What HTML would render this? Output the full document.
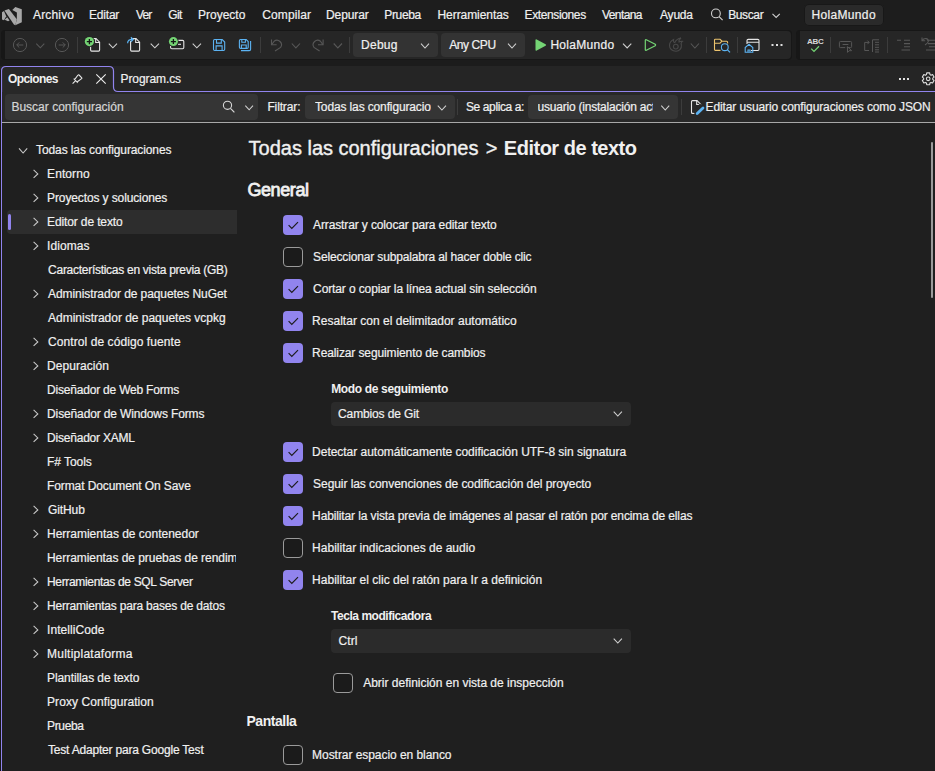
<!DOCTYPE html>
<html><head><meta charset="utf-8"><style>
html,body{margin:0;padding:0;width:935px;height:771px;overflow:hidden;background:#1f1f1f}
.r,.i,.t,.cb{position:absolute}
.t{font-family:"Liberation Sans",sans-serif;white-space:nowrap;line-height:40px;height:40px}
.cb{width:18px;height:18px;border:1px solid #9a9a9a;border-radius:4px;background:#1b1b1b}
.cb.on{width:20px;height:20px;border:none;background:#9184ee}
</style></head><body>
<div class="r" style="left:0px;top:0px;width:935px;height:30px;background:#1d1d1d;"></div>
<svg class="i" style="left:0;top:4px" width="26" height="24" viewBox="0 0 26 24"><g fill="#a8a8a8">
<path d="M2 8.2 L4 7 L6.2 12.2 L4 16.2 L2 15.6 Z"/>
<path d="M4.5 6.6 L8.9 5.1 L16.8 15.2 L15.3 21.2 L13.9 20.4 Z"/>
<path d="M4.7 15.8 L7.2 13.2 L9.6 16.4 L8 17.2 Z"/>
<path d="M12.3 5.9 L15.3 3.1 L21.8 5.3 V18.3 L15.3 21.2 L16.8 15.4 L16.9 8.5 Z"/>
</g></svg>
<div class="r" style="left:804px;top:4px;width:80px;height:22px;background:#2a2a2a;border-radius:5px;box-shadow:inset 0 0 0 1px #181818"></div>
<div class="r" style="left:0px;top:30px;width:935px;height:30px;background:#1d1d1d;"></div>
<div class="r" style="left:1px;top:30px;width:791px;height:30px;background:#171717;border-radius:4px"></div>
<div class="r" style="left:5px;top:31px;width:786px;height:28px;background:#262626;border-radius:0 4px 4px 0"></div>
<div class="r" style="left:796px;top:30px;width:145px;height:30px;background:#171717;border-radius:4px"></div>
<div class="r" style="left:800px;top:31px;width:140px;height:28px;background:#262626;"></div>
<div class="r" style="left:77px;top:37px;width:1px;height:16px;background:#3c3c3c;"></div>
<div class="r" style="left:260px;top:37px;width:1px;height:16px;background:#3c3c3c;"></div>
<div class="r" style="left:349px;top:37px;width:1px;height:16px;background:#3c3c3c;"></div>
<div class="r" style="left:353px;top:33px;width:85px;height:24px;background:#333333;border-radius:4px"></div>
<div class="r" style="left:441px;top:33px;width:84px;height:24px;background:#333333;border-radius:4px"></div>
<div class="r" style="left:706px;top:37px;width:1px;height:16px;background:#3c3c3c;"></div>
<div class="r" style="left:737px;top:37px;width:1px;height:16px;background:#3c3c3c;"></div>
<div class="t" style="left:807px;top:32px;font-size:8px;font-weight:700;color:#d8d8d8;line-height:20px;height:20px;letter-spacing:-0.3px">ABC</div>
<div class="r" style="left:830px;top:37px;width:1px;height:16px;background:#3c3c3c;"></div>
<div class="r" style="left:887px;top:37px;width:1px;height:16px;background:#3c3c3c;"></div>
<div class="r" style="left:0px;top:60px;width:935px;height:6px;background:#1c1c1c;"></div>
<div class="r" style="left:0px;top:66px;width:935px;height:26px;background:#252525;"></div>
<svg class="i" style="left:0;top:60px" width="935" height="711"><path d="M1.5 711 V11 Q1.5 6.5 6 6.5 H109 Q113.5 6.5 113.5 11 V27 Q113.5 31.5 118 31.5 H935" fill="#282828" stroke="#9184ee" stroke-width="1.2"/></svg>
<div class="r" style="left:2px;top:92px;width:933px;height:30px;background:#282828;"></div>
<div class="r" style="left:5px;top:94px;width:253px;height:26px;background:#353535;border-radius:4px"></div>
<div class="r" style="left:305px;top:95px;width:150px;height:24px;background:#353535;border-radius:4px"></div>
<div class="r" style="left:457px;top:99px;width:1px;height:16px;background:#3c3c3c;"></div>
<div class="r" style="left:528px;top:95px;width:150px;height:24px;background:#353535;border-radius:4px"></div>
<div class="r" style="left:681px;top:99px;width:1px;height:16px;background:#3c3c3c;"></div>
<div class="r" style="left:2px;top:122px;width:933px;height:1px;background:#a8a8a8;"></div>
<div class="r" style="left:2px;top:123px;width:933px;height:648px;background:#1f1f1f;"></div>
<div class="r" style="left:7px;top:210px;width:230px;height:24px;background:#2d2d2d;border-radius:4px 0 0 4px"></div>
<div class="r" style="left:8px;top:214px;width:3px;height:16px;background:#9184ee;border-radius:2px"></div>
<div class="cb on" style="left:283px;top:215px"></div>
<div class="cb" style="left:283px;top:247px"></div>
<div class="cb on" style="left:283px;top:279px"></div>
<div class="cb on" style="left:283px;top:311px"></div>
<div class="cb on" style="left:283px;top:343px"></div>
<div class="cb on" style="left:283px;top:442px"></div>
<div class="cb on" style="left:283px;top:474px"></div>
<div class="cb on" style="left:283px;top:506px"></div>
<div class="cb" style="left:283px;top:538px"></div>
<div class="cb on" style="left:283px;top:570px"></div>
<div class="cb" style="left:283px;top:745px"></div>
<div class="cb" style="left:333px;top:673px"></div>
<div class="r" style="left:331px;top:402px;width:300px;height:24px;background:#2b2b2b;border-radius:4px"></div>
<div class="r" style="left:331px;top:629px;width:300px;height:24px;background:#2b2b2b;border-radius:4px"></div>
<div class="r" style="left:931px;top:142px;width:2px;height:156px;background:#9a9a9a;border-radius:1px"></div>
<div class="r" style="left:0px;top:70px;width:1px;height:701px;background:#161616;"></div>
<svg class="i" style="left:0;top:0" width="935" height="771">
<circle cx="715.9" cy="13.4" r="4.4" fill="none" stroke="#d0d0d0" stroke-width="1.1"/><path d="M719.1 16.7 L722.6 20.2" stroke="#d0d0d0" stroke-width="1.2"/>
<path d="M772.5 13.8 L776.15 17.4 L779.8 13.8" fill="none" stroke="#d0d0d0" stroke-width="1.1"/>
<circle cx="20" cy="45" r="6.6" fill="none" stroke="#575757" stroke-width="1"/><path d="M23.3 45 H16.8 M19.3 42.4 L16.7 45 L19.3 47.6" fill="none" stroke="#575757" stroke-width="1"/>
<path d="M36.3 43.6 L40.3 47.8 L44.3 43.6" fill="none" stroke="#575757" stroke-width="1.1"/>
<circle cx="62" cy="45" r="6.6" fill="none" stroke="#575757" stroke-width="1"/><path d="M58.7 45 H65.2 M62.7 42.4 L65.3 45 L62.7 47.6" fill="none" stroke="#575757" stroke-width="1"/>
<path d="M90.6 39.6 Q90.6 38.6 91.6 38.6 H96.0 L99.6 42.2 V50.1 Q99.6 51.1 98.6 51.1 H91.6 Q90.6 51.1 90.6 50.1 Z" fill="none" stroke="#e6e6e6" stroke-width="1.1"/><path d="M95.7 38.6 V42.5 H99.6" fill="none" stroke="#e6e6e6" stroke-width="1.1"/>
<circle cx="89.4" cy="41.6" r="5.4" fill="#262626"/><circle cx="89.4" cy="41.6" r="4.6" fill="#74d474"/><path d="M89.4 39 V44.2 M86.8 41.6 H92" stroke="#151515" stroke-width="1.3"/>
<path d="M108.8 43.6 L112.9 47.8 L117 43.6" fill="none" stroke="#d0d0d0" stroke-width="1.1"/>
<path d="M130.6 39.6 Q130.6 38.6 131.6 38.6 H136.0 L139.6 42.2 V50.1 Q139.6 51.1 138.6 51.1 H131.6 Q130.6 51.1 130.6 50.1 Z" fill="none" stroke="#e6e6e6" stroke-width="1.1"/><path d="M135.7 38.6 V42.5 H139.6" fill="none" stroke="#e6e6e6" stroke-width="1.1"/>
<rect x="126" y="36" width="5" height="5" fill="#262626"/><path d="M127.6 43.2 Q127.6 39.4 132.8 39.4" fill="none" stroke="#5cb3f2" stroke-width="1.2"/><path d="M130.9 37.3 L133.2 39.5 L130.9 41.7" fill="none" stroke="#5cb3f2" stroke-width="1.2"/>
<path d="M150.7 43.6 L154.85 47.8 L159 43.6" fill="none" stroke="#d0d0d0" stroke-width="1.1"/>
<rect x="170.6" y="40.4" width="13.2" height="8.4" rx="1.2" fill="none" stroke="#e6e6e6" stroke-width="1.1"/><path d="M178 44.3 H181" stroke="#e6e6e6" stroke-width="1.1"/>
<circle cx="173.4" cy="41.6" r="5.3" fill="#262626"/><circle cx="173.4" cy="41.6" r="4.5" fill="#74d474"/><path d="M173.4 39.1 V44.1 M170.9 41.6 H175.9" stroke="#151515" stroke-width="1.3"/>
<path d="M192.7 43.6 L196.85 47.8 L201 43.6" fill="none" stroke="#d0d0d0" stroke-width="1.1"/>
<path d="M213.5 40.7 Q213.5 39.5 214.7 39.5 H222.2 L224.7 42.0 V49.3 Q224.7 50.5 223.5 50.5 H214.7 Q213.5 50.5 213.5 49.3 Z" fill="none" stroke="#5cb3f2" stroke-width="1.1"/><path d="M216.5 39.5 V43.1 H221.29999999999998 V39.5 M216.1 50.5 V45.9 H222.1 V50.5" fill="none" stroke="#5cb3f2" stroke-width="1.1"/>
<path d="M239.4 40.7 Q239.4 39.5 240.6 39.5 H246.2 L248.2 41.5 V47.199999999999996 Q248.2 48.4 247.0 48.4 H240.6 Q239.4 48.4 239.4 47.199999999999996 Z" fill="none" stroke="#5cb3f2" stroke-width="1.1"/><path d="M241.8 39.5 V42.3 H245.39999999999998 V39.5 M241.4 48.4 V45.0 H246.2 V48.4" fill="none" stroke="#5cb3f2" stroke-width="1.1"/>
<path d="M241 50.6 H249.2 Q250.6 50.6 250.6 49.2 V41" fill="none" stroke="#5cb3f2" stroke-width="1.1"/>
<path d="M271.5 39.4 V44.8 H276.6" fill="none" stroke="#575757" stroke-width="1.1"/><path d="M271.9 44.4 L274.1 41.3 A4.5 4.5 0 0 1 280.6 47.4 L275 51" fill="none" stroke="#575757" stroke-width="1.1"/>
<g transform="translate(594.6 0) scale(-1 1)"><path d="M271.5 39.4 V44.8 H276.6" fill="none" stroke="#575757" stroke-width="1.1"/><path d="M271.9 44.4 L274.1 41.3 A4.5 4.5 0 0 1 280.6 47.4 L275 51" fill="none" stroke="#575757" stroke-width="1.1"/></g>
<path d="M291.8 43.5 L295.9 47.9 L300 43.5" fill="none" stroke="#575757" stroke-width="1.1"/>
<path d="M333.7 43.5 L337.85 47.9 L342 43.5" fill="none" stroke="#575757" stroke-width="1.1"/>
<path d="M421 43.6 L425.0 48 L429 43.6" fill="none" stroke="#d0d0d0" stroke-width="1.1"/>
<path d="M508 43.6 L512.0 48 L516 43.6" fill="none" stroke="#d0d0d0" stroke-width="1.1"/>
<path d="M535.5 40.2 Q535.5 38.9 536.7 39.5 L545.6 44.2 Q546.6 45 545.6 45.8 L536.7 50.5 Q535.5 51.1 535.5 49.8 Z" fill="#74d474"/>
<path d="M623 43.6 L627.15 48 L631.3 43.6" fill="none" stroke="#d0d0d0" stroke-width="1.1"/>
<path d="M645.3 40.3 Q645.3 39.3 646.3 39.8 L655.2 44.3 Q656 45 655.2 45.7 L646.3 50.2 Q645.3 50.7 645.3 49.7 Z" fill="none" stroke="#74d474" stroke-width="1.2"/>
<path d="M676 51.2 C672 51.2 669.5 48.6 669.5 45.6 C669.5 42.6 671.5 40.6 673.6 39.6 C673.2 41.4 673.8 42.4 674.8 42.6 C675.6 40.6 677.4 38.6 681 38 C679.2 39.4 678.6 40.8 679 42 C680 41.4 681.2 41.2 682.4 41.4 C681 42.4 680.8 43.6 681.4 45 C681.8 48.6 679.4 51.2 676 51.2 Z" fill="none" stroke="#484848" stroke-width="1.1"/><circle cx="675.8" cy="46.6" r="2.4" fill="none" stroke="#484848" stroke-width="1.1"/>
<path d="M690.8 43.5 L694.9 48 L699 43.5" fill="none" stroke="#575757" stroke-width="1.1"/>
<path d="M714.5 49.6 V40 Q714.5 39.3 715.3 39.3 H720 L722 41.2 H726.6 Q727.6 41.2 727.6 42.2 V43.5 M714.5 49.6 Q714.5 50.4 715.3 50.4 H720.5 M714.5 43.2 H720 L722 41.2" fill="none" stroke="#ecc46e" stroke-width="1.1"/>
<circle cx="724.8" cy="47.2" r="3.4" fill="#262626" stroke="#5cb3f2" stroke-width="1.1"/><path d="M727.3 49.7 L730 52.4" stroke="#5cb3f2" stroke-width="1.2"/>
<path d="M751 50.5 H757.8 Q759 50.5 759 49.3 V40.6 Q759 39.4 757.8 39.4 H748.2 Q747 39.4 747 40.6 V44 M747 42.2 H759" fill="none" stroke="#e6e6e6" stroke-width="1.1"/>
<path d="M745.2 52.2 V47.6 L749 44.3 L752.8 47.6 V52.2 Z M748 52.2 V50 H750 V52.2" fill="none" stroke="#5cb3f2" stroke-width="1.1"/>
<rect x="771.5" y="44" width="2" height="2" fill="#e0e0e0"/><rect x="776" y="44" width="2" height="2" fill="#e0e0e0"/><rect x="780.5" y="44" width="2" height="2" fill="#e0e0e0"/>
<path d="M811.2 48.6 L814 51.4 L819 46.2" fill="none" stroke="#74d474" stroke-width="1.3"/>
<path d="M846.8 47.6 H850.6 Q851.6 47.6 851.6 46.6 V42.5 Q851.6 41.5 850.6 41.5 H840.4 Q839.4 41.5 839.4 42.5 V46.6 Q839.4 47.6 840.4 47.6 H845.2 M842.6 44.5 H848.4 M847.5 46.6 V52.4 L849.1 50.7 H851.6 Z" fill="none" stroke="#575757" stroke-width="1"/>
<path d="M869 42.4 H864.7 V50.5 H869 M867.4 40.6 L869.2 42.4 L867.4 44.2" fill="none" stroke="#575757" stroke-width="1"/><path d="M872.5 52 V39.8 H879 M875 42.3 H879 M875 44.8 H879 M875 47.3 H879 M875 49.8 H879 M875 52 H879" fill="none" stroke="#575757" stroke-width="1"/>
<path d="M897 40.2 H901 M904 40.2 H910 M904 43.6 H910 M904 46.8 H910 M901.5 50 H910" fill="none" stroke="#575757" stroke-width="1.1"/>
<path d="M922 37.6 V40.8 H925.2 M922.4 40.4 C924 37.6 928.4 38.2 928.4 41 C928.4 42.8 926.6 44 925 45 M927 40.2 H935 M928 43.6 H935 M929 46.8 H935 M926 50 H935" fill="none" stroke="#575757" stroke-width="1.1"/>
<path d="M72.6 83.6 L75.4 80.8 M73.7 78.7 L77.9 82.9 M74.6 79.6 L78 75 Q78.4 74.4 79 75 L81.6 77.6 Q82.2 78.2 81.6 78.6 L77 82" fill="none" stroke="#e6e6e6" stroke-width="1.1"/>
<path d="M96.3 74.3 L105.7 83.7 M105.7 74.3 L96.3 83.7" stroke="#eeeeee" stroke-width="1.1"/>
<rect x="899" y="78" width="2" height="2" fill="#e0e0e0"/><rect x="903" y="78" width="2" height="2" fill="#e0e0e0"/><rect x="907" y="78" width="2" height="2" fill="#e0e0e0"/>
<path d="M926.72 72.88 L929.68 72.88 L929.92 74.53 L931.03 75.18 L932.59 74.56 L934.06 77.12 L932.76 78.16 L932.76 79.44 L934.06 80.48 L932.59 83.04 L931.03 82.42 L929.92 83.07 L929.68 84.72 L926.72 84.72 L926.48 83.07 L925.37 82.42 L923.81 83.04 L922.34 80.48 L923.64 79.44 L923.64 78.16 L922.34 77.12 L923.81 74.56 L925.37 75.18 L926.48 74.53 Z" fill="none" stroke="#dedede" stroke-width="1.1" stroke-linejoin="round"/><circle cx="928.2" cy="78.8" r="1.8" fill="none" stroke="#dedede" stroke-width="1.1"/>
<circle cx="227.5" cy="105.3" r="4.1" fill="none" stroke="#d8d8d8" stroke-width="1.1"/><path d="M230.5 108.4 L234.4 112.4" stroke="#d8d8d8" stroke-width="1.2"/>
<path d="M245.3 105.6 L249.15 109.8 L253 105.6" fill="none" stroke="#d0d0d0" stroke-width="1.1"/>
<path d="M437.8 105.6 L441.9 110 L446 105.6" fill="none" stroke="#d0d0d0" stroke-width="1.1"/>
<path d="M661.3 105.6 L665.25 110 L669.2 105.6" fill="none" stroke="#d0d0d0" stroke-width="1.1"/>
<path d="M691.5 101.6 Q691.5 100.6 692.5 100.6 H697.0 L700.6 104.19999999999999 V112.4 Q700.6 113.4 699.6 113.4 H692.5 Q691.5 113.4 691.5 112.4 Z" fill="none" stroke="#e6e6e6" stroke-width="1.1"/><path d="M696.7 100.6 V104.49999999999999 H700.6" fill="none" stroke="#e6e6e6" stroke-width="1.1"/>
<rect x="694" y="106" width="11" height="10" fill="#282828" transform="rotate(-43 699.5 111)"/><path d="M697.2 113.5 L703 108" stroke="#5cb3f2" stroke-width="2.8" stroke-linecap="round"/>
<path d="M19 148.3 L23.1 153 L27.2 148.3" fill="none" stroke="#c8c8c8" stroke-width="1.1"/>
<path d="M33.6 169.9 L37.8 173.9 L33.6 177.9" fill="none" stroke="#c8c8c8" stroke-width="1.1"/>
<path d="M33.6 193.9 L37.8 197.9 L33.6 201.9" fill="none" stroke="#c8c8c8" stroke-width="1.1"/>
<path d="M33.6 217.9 L37.8 221.9 L33.6 225.9" fill="none" stroke="#c8c8c8" stroke-width="1.1"/>
<path d="M33.6 241.9 L37.8 245.9 L33.6 249.9" fill="none" stroke="#c8c8c8" stroke-width="1.1"/>
<path d="M33.6 289.9 L37.8 293.9 L33.6 297.9" fill="none" stroke="#c8c8c8" stroke-width="1.1"/>
<path d="M33.6 337.9 L37.8 341.9 L33.6 345.9" fill="none" stroke="#c8c8c8" stroke-width="1.1"/>
<path d="M33.6 361.9 L37.8 365.9 L33.6 369.9" fill="none" stroke="#c8c8c8" stroke-width="1.1"/>
<path d="M33.6 409.9 L37.8 413.9 L33.6 417.9" fill="none" stroke="#c8c8c8" stroke-width="1.1"/>
<path d="M33.6 433.9 L37.8 437.9 L33.6 441.9" fill="none" stroke="#c8c8c8" stroke-width="1.1"/>
<path d="M33.6 505.9 L37.8 509.9 L33.6 513.9" fill="none" stroke="#c8c8c8" stroke-width="1.1"/>
<path d="M33.6 529.9 L37.8 533.9 L33.6 537.9" fill="none" stroke="#c8c8c8" stroke-width="1.1"/>
<path d="M33.6 577.9 L37.8 581.9 L33.6 585.9" fill="none" stroke="#c8c8c8" stroke-width="1.1"/>
<path d="M33.6 601.9 L37.8 605.9 L33.6 609.9" fill="none" stroke="#c8c8c8" stroke-width="1.1"/>
<path d="M33.6 625.9 L37.8 629.9 L33.6 633.9" fill="none" stroke="#c8c8c8" stroke-width="1.1"/>
<path d="M33.6 649.9 L37.8 653.9 L33.6 657.9" fill="none" stroke="#c8c8c8" stroke-width="1.1"/>
<path d="M288.6 225.2 L291.8 228.4 L298 222.2" fill="none" stroke="#1c1c1c" stroke-width="1.2"/>
<path d="M288.6 289.2 L291.8 292.4 L298 286.2" fill="none" stroke="#1c1c1c" stroke-width="1.2"/>
<path d="M288.6 321.2 L291.8 324.4 L298 318.2" fill="none" stroke="#1c1c1c" stroke-width="1.2"/>
<path d="M288.6 353.2 L291.8 356.4 L298 350.2" fill="none" stroke="#1c1c1c" stroke-width="1.2"/>
<path d="M288.6 452.2 L291.8 455.4 L298 449.2" fill="none" stroke="#1c1c1c" stroke-width="1.2"/>
<path d="M288.6 484.2 L291.8 487.4 L298 481.2" fill="none" stroke="#1c1c1c" stroke-width="1.2"/>
<path d="M288.6 516.2 L291.8 519.4 L298 513.2" fill="none" stroke="#1c1c1c" stroke-width="1.2"/>
<path d="M288.6 580.2 L291.8 583.4 L298 577.2" fill="none" stroke="#1c1c1c" stroke-width="1.2"/>
<path d="M613.7 411.6 L617.8 416 L621.9 411.6" fill="none" stroke="#d0d0d0" stroke-width="1.1"/>
<path d="M613.7 638.6 L617.8 643 L621.9 638.6" fill="none" stroke="#d0d0d0" stroke-width="1.1"/>
</svg>
<div class="t" style="left:33.00px;top:-5px;font-size:12px;letter-spacing:0.167px;color:#f0f0f0;-webkit-text-stroke:0.2px #f0f0f0">Archivo</div>
<div class="t" style="left:89.00px;top:-5px;font-size:12px;letter-spacing:-0.200px;color:#f0f0f0;-webkit-text-stroke:0.2px #f0f0f0">Editar</div>
<div class="t" style="left:136.00px;top:-5px;font-size:12px;letter-spacing:-0.900px;color:#f0f0f0;-webkit-text-stroke:0.2px #f0f0f0">Ver</div>
<div class="t" style="left:168.30px;top:-5px;font-size:12px;letter-spacing:-0.650px;color:#f0f0f0;-webkit-text-stroke:0.2px #f0f0f0">Git</div>
<div class="t" style="left:198.00px;top:-5px;font-size:12px;letter-spacing:0.000px;color:#f0f0f0;-webkit-text-stroke:0.2px #f0f0f0">Proyecto</div>
<div class="t" style="left:262.30px;top:-5px;font-size:12px;letter-spacing:0.114px;color:#f0f0f0;-webkit-text-stroke:0.2px #f0f0f0">Compilar</div>
<div class="t" style="left:326.00px;top:-5px;font-size:12px;letter-spacing:-0.100px;color:#f0f0f0;-webkit-text-stroke:0.2px #f0f0f0">Depurar</div>
<div class="t" style="left:384.30px;top:-5px;font-size:12px;letter-spacing:-0.360px;color:#f0f0f0;-webkit-text-stroke:0.2px #f0f0f0">Prueba</div>
<div class="t" style="left:437.50px;top:-5px;font-size:12px;letter-spacing:-0.064px;color:#f0f0f0;-webkit-text-stroke:0.2px #f0f0f0">Herramientas</div>
<div class="t" style="left:524.50px;top:-5px;font-size:12px;letter-spacing:-0.370px;color:#f0f0f0;-webkit-text-stroke:0.2px #f0f0f0">Extensiones</div>
<div class="t" style="left:602.00px;top:-5px;font-size:12px;letter-spacing:-0.583px;color:#f0f0f0;-webkit-text-stroke:0.2px #f0f0f0">Ventana</div>
<div class="t" style="left:660.00px;top:-5px;font-size:12px;letter-spacing:-0.200px;color:#f0f0f0;-webkit-text-stroke:0.2px #f0f0f0">Ayuda</div>
<div class="t" style="left:728.20px;top:-5px;font-size:12px;letter-spacing:-0.380px;color:#f0f0f0;-webkit-text-stroke:0.2px #f0f0f0">Buscar</div>
<div class="t" style="left:811.40px;top:-5px;font-size:12px;letter-spacing:0.350px;color:#f0f0f0;-webkit-text-stroke:0.2px #f0f0f0">HolaMundo</div>
<div class="t" style="left:361.10px;top:25px;font-size:12px;letter-spacing:0.225px;color:#f0f0f0;-webkit-text-stroke:0.2px #f0f0f0">Debug</div>
<div class="t" style="left:449.20px;top:25px;font-size:12px;letter-spacing:-0.400px;color:#f0f0f0;-webkit-text-stroke:0.2px #f0f0f0">Any CPU</div>
<div class="t" style="left:550.40px;top:25px;font-size:12px;letter-spacing:0.300px;color:#f0f0f0;-webkit-text-stroke:0.2px #f0f0f0">HolaMundo</div>
<div class="t" style="left:8.10px;top:59px;font-size:12px;letter-spacing:-0.614px;color:#f0f0f0;font-weight:700">Opciones</div>
<div class="t" style="left:120.50px;top:59px;font-size:12px;letter-spacing:-0.089px;color:#f0f0f0;-webkit-text-stroke:0.2px #f0f0f0">Program.cs</div>
<div class="t" style="left:11.40px;top:87px;font-size:12px;letter-spacing:0.011px;color:#d6d6d6;-webkit-text-stroke:0.2px #d6d6d6">Buscar configuración</div>
<div class="t" style="left:267.40px;top:87px;font-size:12px;letter-spacing:-0.129px;color:#f0f0f0;-webkit-text-stroke:0.2px #f0f0f0">Filtrar:</div>
<div class="t" style="left:315.00px;top:87px;font-size:12px;letter-spacing:-0.133px;color:#f0f0f0;-webkit-text-stroke:0.2px #f0f0f0;width:115.80000000000001px;overflow:hidden">Todas las configuraciones</div>
<div class="t" style="left:466.00px;top:87px;font-size:12px;letter-spacing:-0.391px;color:#f0f0f0;-webkit-text-stroke:0.2px #f0f0f0">Se aplica a:</div>
<div class="t" style="left:537.50px;top:87px;font-size:12px;letter-spacing:-0.214px;color:#f0f0f0;-webkit-text-stroke:0.2px #f0f0f0;width:115.89999999999998px;overflow:hidden">usuario (instalación actual)</div>
<div class="t" style="left:705.50px;top:87px;font-size:12px;letter-spacing:-0.108px;color:#f0f0f0;-webkit-text-stroke:0.2px #f0f0f0">Editar usuario configuraciones como JSON</div>
<div class="t" style="left:36.10px;top:130px;font-size:12px;letter-spacing:-0.112px;color:#f0f0f0;-webkit-text-stroke:0.2px #f0f0f0">Todas las configuraciones</div>
<div class="t" style="left:47.10px;top:154px;font-size:12px;letter-spacing:0.083px;color:#f0f0f0;-webkit-text-stroke:0.2px #f0f0f0">Entorno</div>
<div class="t" style="left:47.10px;top:178px;font-size:12px;letter-spacing:-0.119px;color:#f0f0f0;-webkit-text-stroke:0.2px #f0f0f0">Proyectos y soluciones</div>
<div class="t" style="left:47.10px;top:202px;font-size:12px;letter-spacing:-0.129px;color:#f0f0f0;-webkit-text-stroke:0.2px #f0f0f0">Editor de texto</div>
<div class="t" style="left:47.10px;top:226px;font-size:12px;letter-spacing:0.083px;color:#f0f0f0;-webkit-text-stroke:0.2px #f0f0f0">Idiomas</div>
<div class="t" style="left:48.10px;top:250px;font-size:12px;letter-spacing:-0.277px;color:#f0f0f0;-webkit-text-stroke:0.2px #f0f0f0">Características en vista previa (GB)</div>
<div class="t" style="left:48.10px;top:274px;font-size:12px;letter-spacing:-0.090px;color:#f0f0f0;-webkit-text-stroke:0.2px #f0f0f0">Administrador de paquetes NuGet</div>
<div class="t" style="left:48.10px;top:298px;font-size:12px;letter-spacing:-0.020px;color:#f0f0f0;-webkit-text-stroke:0.2px #f0f0f0">Administrador de paquetes vcpkg</div>
<div class="t" style="left:48.10px;top:322px;font-size:12px;letter-spacing:0.074px;color:#f0f0f0;-webkit-text-stroke:0.2px #f0f0f0">Control de código fuente</div>
<div class="t" style="left:47.10px;top:346px;font-size:12px;letter-spacing:0.044px;color:#f0f0f0;-webkit-text-stroke:0.2px #f0f0f0">Depuración</div>
<div class="t" style="left:47.10px;top:370px;font-size:12px;letter-spacing:-0.205px;color:#f0f0f0;-webkit-text-stroke:0.2px #f0f0f0">Diseñador de Web Forms</div>
<div class="t" style="left:47.10px;top:394px;font-size:12px;letter-spacing:-0.136px;color:#f0f0f0;-webkit-text-stroke:0.2px #f0f0f0">Diseñador de Windows Forms</div>
<div class="t" style="left:47.10px;top:418px;font-size:12px;letter-spacing:-0.215px;color:#f0f0f0;-webkit-text-stroke:0.2px #f0f0f0">Diseñador XAML</div>
<div class="t" style="left:47.10px;top:442px;font-size:12px;letter-spacing:-0.057px;color:#f0f0f0;-webkit-text-stroke:0.2px #f0f0f0">F# Tools</div>
<div class="t" style="left:47.00px;top:466px;font-size:12px;letter-spacing:-0.100px;color:#f0f0f0;-webkit-text-stroke:0.2px #f0f0f0">Format Document On Save</div>
<div class="t" style="left:48.00px;top:490px;font-size:12px;letter-spacing:-0.100px;color:#f0f0f0;-webkit-text-stroke:0.2px #f0f0f0">GitHub</div>
<div class="t" style="left:47.00px;top:514px;font-size:12px;letter-spacing:-0.012px;color:#f0f0f0;-webkit-text-stroke:0.2px #f0f0f0">Herramientas de contenedor</div>
<div class="t" style="left:47.00px;top:538px;font-size:12px;letter-spacing:-0.050px;color:#f0f0f0;-webkit-text-stroke:0.2px #f0f0f0;width:189.0px;overflow:hidden">Herramientas de pruebas de rendimiento</div>
<div class="t" style="left:47.00px;top:562px;font-size:12px;letter-spacing:-0.336px;color:#f0f0f0;-webkit-text-stroke:0.2px #f0f0f0">Herramientas de SQL Server</div>
<div class="t" style="left:47.00px;top:586px;font-size:12px;letter-spacing:-0.200px;color:#f0f0f0;-webkit-text-stroke:0.2px #f0f0f0">Herramientas para bases de datos</div>
<div class="t" style="left:47.00px;top:610px;font-size:12px;letter-spacing:0.060px;color:#f0f0f0;-webkit-text-stroke:0.2px #f0f0f0">IntelliCode</div>
<div class="t" style="left:47.00px;top:634px;font-size:12px;letter-spacing:0.250px;color:#f0f0f0;-webkit-text-stroke:0.2px #f0f0f0">Multiplataforma</div>
<div class="t" style="left:47.00px;top:658px;font-size:12px;letter-spacing:-0.094px;color:#f0f0f0;-webkit-text-stroke:0.2px #f0f0f0">Plantillas de texto</div>
<div class="t" style="left:47.00px;top:682px;font-size:12px;letter-spacing:0.078px;color:#f0f0f0;-webkit-text-stroke:0.2px #f0f0f0">Proxy Configuration</div>
<div class="t" style="left:47.00px;top:706px;font-size:12px;letter-spacing:-0.340px;color:#f0f0f0;-webkit-text-stroke:0.2px #f0f0f0">Prueba</div>
<div class="t" style="left:48.00px;top:730px;font-size:12px;letter-spacing:-0.196px;color:#f0f0f0;-webkit-text-stroke:0.2px #f0f0f0">Test Adapter para Google Test</div>
<div class="t" style="left:248.60px;top:128px;font-size:20px;letter-spacing:-0.012px;color:#f0f0f0;-webkit-text-stroke:0.4px #f0f0f0">Todas las configuraciones</div>
<div class="t" style="left:485.80px;top:128px;font-size:20px;letter-spacing:-0.600px;color:#f0f0f0;-webkit-text-stroke:0.3px #f0f0f0">&gt;</div>
<div class="t" style="left:503.80px;top:128px;font-size:20px;letter-spacing:-0.486px;color:#f0f0f0;font-weight:700">Editor de texto</div>
<div class="t" style="left:247.40px;top:170px;font-size:18px;letter-spacing:-0.400px;color:#f0f0f0;-webkit-text-stroke:0.8px #f0f0f0">General</div>
<div class="t" style="left:313.10px;top:205px;font-size:12px;letter-spacing:-0.128px;color:#f0f0f0;-webkit-text-stroke:0.2px #f0f0f0">Arrastrar y colocar para editar texto</div>
<div class="t" style="left:313.10px;top:237px;font-size:12px;letter-spacing:-0.154px;color:#f0f0f0;-webkit-text-stroke:0.2px #f0f0f0">Seleccionar subpalabra al hacer doble clic</div>
<div class="t" style="left:313.10px;top:269px;font-size:12px;letter-spacing:-0.120px;color:#f0f0f0;-webkit-text-stroke:0.2px #f0f0f0">Cortar o copiar la línea actual sin selección</div>
<div class="t" style="left:312.10px;top:301px;font-size:12px;letter-spacing:0.016px;color:#f0f0f0;-webkit-text-stroke:0.2px #f0f0f0">Resaltar con el delimitador automático</div>
<div class="t" style="left:312.10px;top:333px;font-size:12px;letter-spacing:-0.110px;color:#f0f0f0;-webkit-text-stroke:0.2px #f0f0f0">Realizar seguimiento de cambios</div>
<div class="t" style="left:312.10px;top:432px;font-size:12px;letter-spacing:-0.027px;color:#f0f0f0;-webkit-text-stroke:0.2px #f0f0f0">Detectar automáticamente codificación UTF-8 sin signatura</div>
<div class="t" style="left:313.10px;top:464px;font-size:12px;letter-spacing:-0.065px;color:#f0f0f0;-webkit-text-stroke:0.2px #f0f0f0">Seguir las convenciones de codificación del proyecto</div>
<div class="t" style="left:312.10px;top:496px;font-size:12px;letter-spacing:-0.124px;color:#f0f0f0;-webkit-text-stroke:0.2px #f0f0f0">Habilitar la vista previa de imágenes al pasar el ratón por encima de ellas</div>
<div class="t" style="left:312.10px;top:528px;font-size:12px;letter-spacing:0.007px;color:#f0f0f0;-webkit-text-stroke:0.2px #f0f0f0">Habilitar indicaciones de audio</div>
<div class="t" style="left:312.10px;top:560px;font-size:12px;letter-spacing:0.011px;color:#f0f0f0;-webkit-text-stroke:0.2px #f0f0f0">Habilitar el clic del ratón para Ir a definición</div>
<div class="t" style="left:312.10px;top:735px;font-size:12px;letter-spacing:-0.054px;color:#f0f0f0;-webkit-text-stroke:0.2px #f0f0f0">Mostrar espacio en blanco</div>
<div class="t" style="left:331.20px;top:369px;font-size:12px;letter-spacing:-0.344px;color:#f0f0f0;font-weight:700">Modo de seguimiento</div>
<div class="t" style="left:338.10px;top:394px;font-size:12px;letter-spacing:-0.138px;color:#f0f0f0;-webkit-text-stroke:0.2px #f0f0f0">Cambios de Git</div>
<div class="t" style="left:331.10px;top:596px;font-size:12px;letter-spacing:-0.471px;color:#f0f0f0;font-weight:700">Tecla modificadora</div>
<div class="t" style="left:338.40px;top:621px;font-size:12px;letter-spacing:0.133px;color:#f0f0f0;-webkit-text-stroke:0.2px #f0f0f0">Ctrl</div>
<div class="t" style="left:363.20px;top:663px;font-size:12px;letter-spacing:-0.008px;color:#f0f0f0;-webkit-text-stroke:0.2px #f0f0f0">Abrir definición en vista de inspección</div>
<div class="t" style="left:246.50px;top:701px;font-size:14px;letter-spacing:-0.471px;color:#f0f0f0;font-weight:700">Pantalla</div>
</body></html>
